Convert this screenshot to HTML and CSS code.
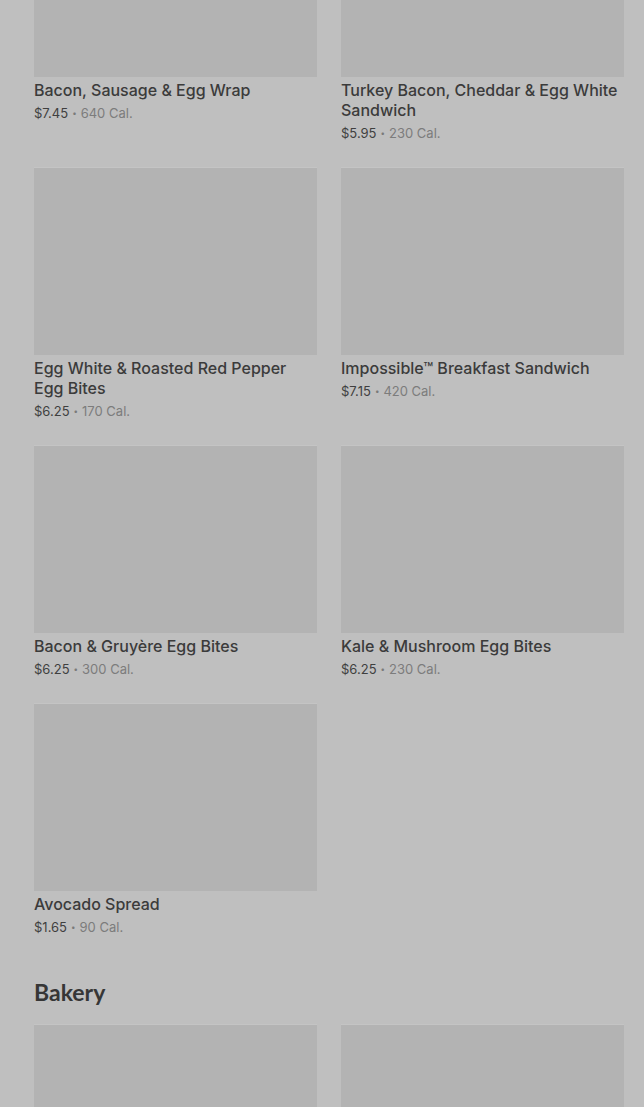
FILE: index.html
```html
<!DOCTYPE html>
<html>
<head>
<meta charset="utf-8">
<link rel="stylesheet" href="styles.css">
</head>
<body>
<main class="page">
  <section class="grid first">
    <div class="card"><div class="img"></div><div class="name">Bacon, Sausage &amp; Egg Wrap</div><div class="meta"><span class="price">$7.45</span><span class="dot">•</span><span class="cal">640 Cal.</span></div></div>
    <div class="card"><div class="img"></div><div class="name">Turkey Bacon, Cheddar &amp; Egg White Sandwich</div><div class="meta"><span class="price">$5.95</span><span class="dot">•</span><span class="cal">230 Cal.</span></div></div>
    <div class="card"><div class="img"></div><div class="name">Egg White &amp; Roasted Red Pepper Egg Bites</div><div class="meta"><span class="price">$6.25</span><span class="dot">•</span><span class="cal">170 Cal.</span></div></div>
    <div class="card"><div class="img"></div><div class="name">Impossible™ Breakfast Sandwich</div><div class="meta"><span class="price">$7.15</span><span class="dot">•</span><span class="cal">420 Cal.</span></div></div>
    <div class="card"><div class="img"></div><div class="name">Bacon &amp; Gruyère Egg Bites</div><div class="meta"><span class="price">$6.25</span><span class="dot">•</span><span class="cal">300 Cal.</span></div></div>
    <div class="card"><div class="img"></div><div class="name">Kale &amp; Mushroom Egg Bites</div><div class="meta"><span class="price">$6.25</span><span class="dot">•</span><span class="cal">230 Cal.</span></div></div>
    <div class="card"><div class="img"></div><div class="name">Avocado Spread</div><div class="meta"><span class="price">$1.65</span><span class="dot">•</span><span class="cal">90 Cal.</span></div></div>
  </section>
  <h2 class="heading">Bakery</h2>
  <section class="grid">
    <div class="card"><div class="img"></div></div>
    <div class="card"><div class="img"></div></div>
  </section>
</main>
</body>
</html>
```
FILE: styles.css
```css
html, body {
  margin: 0;
  padding: 0;
  background: #bfbfbf;
  overflow: hidden;
}
.page {
  padding: 0 20px 0 34px;
  font-family: "Inter", "Roboto", "Liberation Sans", sans-serif;
}
.grid {
  display: grid;
  grid-template-columns: 283px 283px;
  column-gap: 24px;
  row-gap: 24px;
}
.grid.first {
  margin-top: -111px;
}
.img {
  height: 188px;
  background: #b3b3b3;
  border-top: 1px solid #c4c4c4;
  box-sizing: border-box;
}
.name {
  margin-top: 3px;
  font-size: 16px;
  line-height: 20px;
  font-weight: 500;
  color: #3b3b3b;
}
.meta {
  margin-top: 3px;
  height: 20px;
  display: flex;
  align-items: center;
  gap: 4px;
  font-size: 13px;
  line-height: 20px;
  color: #3f3f3f;
}
.dot {
  font-size: 8px;
  line-height: 20px;
  color: #7a7a7a;
}
.cal {
  color: #7c7c7c;
}
.heading {
  margin: 41px 0 18px;
  font-family: "Lato", "Liberation Sans", sans-serif;
  font-weight: 700;
  font-size: 23px;
  line-height: 28px;
  color: #363636;
}
```
